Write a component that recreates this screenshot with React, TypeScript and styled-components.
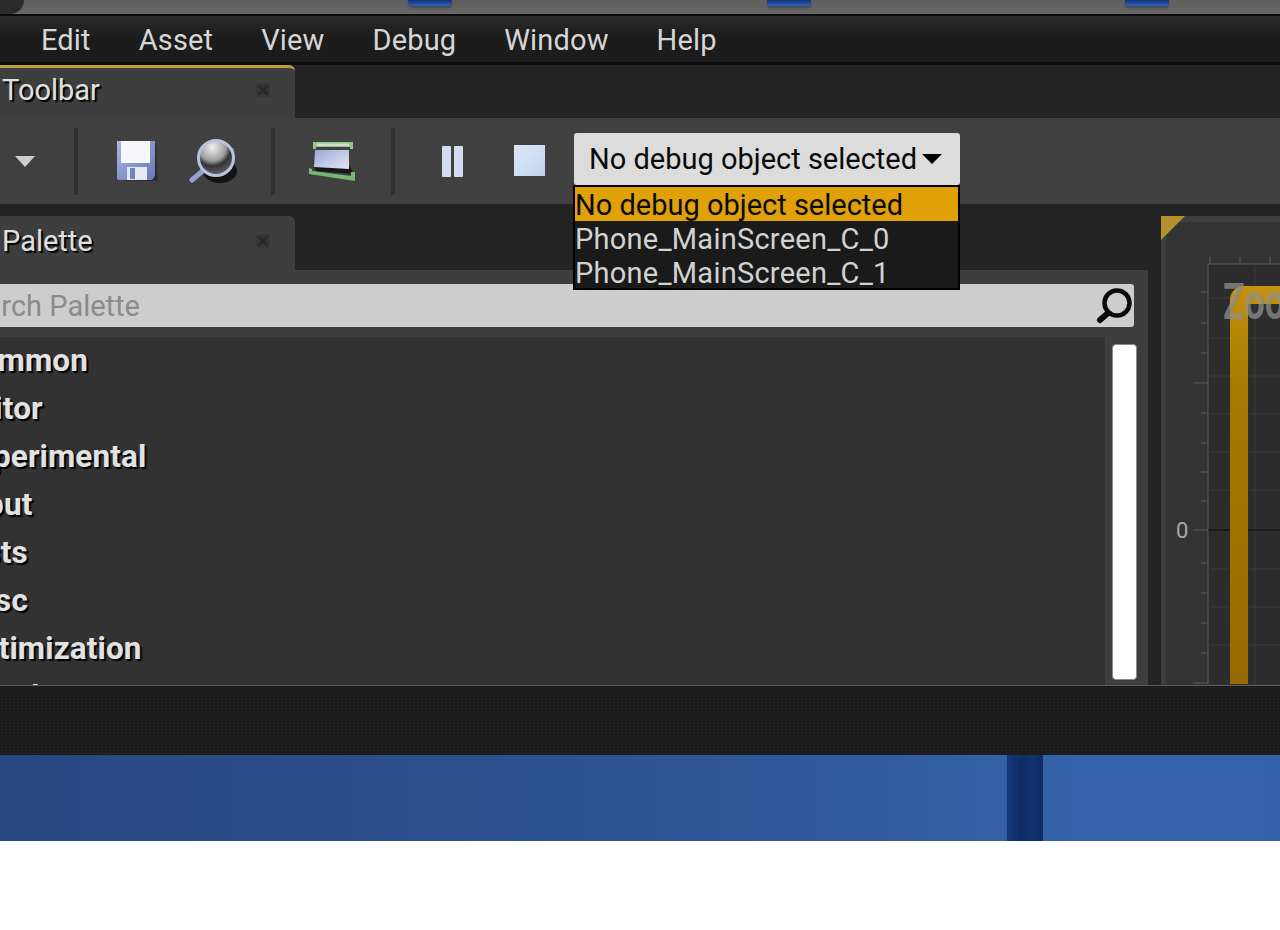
import React from "react";
import styled, { createGlobalStyle } from "styled-components";

const GlobalStyle = createGlobalStyle`
  html, body {
    margin: 0;
    padding: 0;
    background: #fff;
    font-family: Roboto, "Liberation Sans", sans-serif;
  }
`;

const Page = styled.div`
  width: 1280px;
  height: 930px;
  overflow: hidden;
  background: #fff;
  display: flex;
  flex-direction: column;
`;

const TitleBar = styled.div`
  height: 14px;
  flex: none;
  display: flex;
  background: linear-gradient(#5f5f5f, #686868);
  border-bottom: 2px solid #0c0c0c;
`;

const TitleCap = styled.div`
  width: 24px;
  height: 14px;
  margin-right: 384px;
  background: #2a2a2a;
  border-bottom-right-radius: 14px;
`;

const TitleIcon = styled.div<{ $gap?: number }>`
  width: 44px;
  height: 6px;
  margin-right: ${(p) => p.$gap ?? 0}px;
  background: linear-gradient(#14306f, #2f62c8);
  border-radius: 0 0 4px 4px;
  box-shadow: 0 2px 2px rgba(40, 40, 40, 0.45);
`;

const MenuBar = styled.nav`
  height: 46px;
  flex: none;
  display: flex;
  align-items: center;
  gap: 48px;
  padding-left: 41px;
  background: linear-gradient(#2b2b2b, #1c1c1c 45%, #1c1c1c);
  border-bottom: 3px solid #0b0b0b;
`;

const MenuItem = styled.span`
  padding-top: 1px;
  font-size: 29px;
  letter-spacing: 0.15px;
  color: #d6d6d6;
`;

const TabStrip = styled.div`
  flex: none;
  display: flex;
  background: #232323;
`;

const Tab = styled.div<{ $active?: boolean }>`
  box-sizing: border-box;
  width: 295px;
  height: ${(p) => (p.$active ? 53 : 54)}px;
  padding: 0 24px ${(p) => (p.$active ? 6 : 4)}px 2px;
  display: flex;
  align-items: center;
  justify-content: space-between;
  background: #3e3e3e;
  border-top-right-radius: 6px;
  border-top: ${(p) => (p.$active ? "3px solid #b9a233" : "none")};
`;

const TabLabel = styled.span`
  font-size: 29px;
  color: #e0e0e0;
  text-shadow: 2px 2px 1px #000;
`;

const Toolbar = styled.div`
  height: 86px;
  flex: none;
  display: flex;
  align-items: center;
  background: #404040;
`;

const ToolSlot = styled.div<{ $left: number; $w: number }>`
  flex: none;
  display: flex;
  width: ${(p) => p.$w}px;
  margin-left: ${(p) => p.$left}px;
  filter: blur(0.5px);
`;

const ToolSeparator = styled.div<{ $left: number }>`
  flex: none;
  width: 4px;
  height: 67px;
  margin-left: ${(p) => p.$left}px;
  background: #2f2f2f;
`;

const DebugCombo = styled.div`
  position: relative;
  flex: none;
  align-self: flex-start;
  box-sizing: border-box;
  width: 386px;
  height: 52px;
  margin-top: 15px;
  margin-left: 28px;
  padding: 0 18px 0 15px;
  display: flex;
  align-items: center;
  justify-content: space-between;
  background: #dcdcdc;
  border-radius: 3px;
  color: #0a0a0a;
  font-size: 29px;
`;

const ComboCaret = styled.div`
  width: 0;
  height: 0;
  border-left: 10px solid transparent;
  border-right: 10px solid transparent;
  border-top: 10px solid #000;
`;

const DebugMenu = styled.ul`
  position: absolute;
  top: 52px;
  left: -1px;
  z-index: 5;
  box-sizing: border-box;
  width: 387px;
  height: 105px;
  margin: 0;
  padding: 0;
  list-style: none;
  background: #1a1a1a;
  border: 2px solid #000;
`;

const DebugOption = styled.li<{ $selected?: boolean }>`
  height: 34px;
  line-height: 36px;
  font-size: 29px;
  white-space: nowrap;
  letter-spacing: ${(p) => (p.$selected ? 0 : 0.25)}px;
  color: ${(p) => (p.$selected ? "#0a0a0a" : "#d2d2d2")};
  background: ${(p) => (p.$selected ? "#e0a008" : "transparent")};
`;

const Gap = styled.div`
  height: 12px;
  flex: none;
  background: #232323;
`;

const Workspace = styled.div`
  height: 469px;
  flex: none;
  display: flex;
  background: #232323;
  border-bottom: 1px solid #5a5a5a;
`;

const PalettePane = styled.section`
  width: 1148px;
  flex: none;
  display: flex;
  flex-direction: column;
`;

const PaletteBody = styled.div`
  flex: 1;
  min-height: 0;
  display: flex;
  flex-direction: column;
  background: #3e3e3e;
  padding-top: 14px;
`;

const SearchBox = styled.div`
  box-sizing: border-box;
  width: 1134px;
  height: 43px;
  flex: none;
  padding-right: 1px;
  display: flex;
  align-items: center;
  justify-content: space-between;
  background: #cdcdcd;
  border-radius: 0 3px 3px 0;
  overflow: hidden;
`;

const SearchHint = styled.span`
  margin-left: -47px;
  font-size: 29px;
  color: #8b8b8b;
`;

const ListRow = styled.div`
  flex: 1;
  min-height: 0;
  margin-top: 10px;
  display: flex;
`;

const CategoryList = styled.ul`
  width: 1105px;
  flex: none;
  margin: 0;
  padding: 0;
  list-style: none;
  overflow: hidden;
  background: #323232;
`;

const Category = styled.li`
  height: 48px;
  line-height: 47px;
  margin-left: -41px;
  font-size: 31.5px;
  font-weight: 700;
  letter-spacing: 0.1px;
  color: #e2e2e2;
  text-shadow: 2px 2px 1px #000;
`;

const ScrollTrack = styled.div`
  flex: 1;
  padding: 7px 11px 5px 7px;
  display: flex;
`;

const ScrollThumb = styled.div`
  flex: 1;
  background: #fff;
  border: 1px solid #8c8c8c;
  border-radius: 4px;
`;

const GraphPane = styled.section`
  flex: 1;
  margin-left: 13px;
  background: #333;
  overflow: hidden;
  display: flex;
`;

const Footer = styled.div`
  height: 69px;
  flex: none;
  background-color: #1c1c1c;
  background-image: radial-gradient(#232323 0.8px, transparent 1px);
  background-size: 4px 3px;
`;

const BlueBand = styled.div`
  height: 86px;
  flex: none;
  display: flex;
  padding-left: 1007px;
  background: linear-gradient(90deg, #26467f, #2f5596 55%, #3663a9 85%, #3562a8);
`;

const BandStripe = styled.div`
  width: 36px;
  background: linear-gradient(90deg, #163a7c, #0d2c68 40%, #12336f 70%, #0c2a66);
`;

const MENU = ["Edit", "Asset", "View", "Debug", "Window", "Help"];
const CATEGORIES = [
  "Common",
  "Editor",
  "Experimental",
  "Input",
  "Lists",
  "Misc",
  "Optimization",
  "Panel",
];
const DEBUG_OBJECTS = ["Phone_MainScreen_C_0", "Phone_MainScreen_C_1"];

function CloseGlyph() {
  return (
    <svg width="16" height="16" viewBox="0 0 16 16" style={{ filter: "blur(0.6px)" }}>
      <rect x="1" y="1" width="14" height="14" rx="2" fill="#363636" />
      <path d="M3.5 3.5l9 9M12.5 3.5l-9 9" stroke="#292929" strokeWidth="3" />
    </svg>
  );
}

function DownArrow() {
  return (
    <svg width="20" height="11" viewBox="0 0 20 11">
      <path d="M0 0h20L10 11z" fill="#cfcfcf" />
    </svg>
  );
}

function SaveIcon() {
  return (
    <svg width="42" height="43" viewBox="0 0 42 43">
      <defs>
        <linearGradient id="diskBody" x1="0" y1="0" x2="1" y2="1">
          <stop offset="0" stopColor="#a9b7e2" />
          <stop offset="1" stopColor="#6278b8" />
        </linearGradient>
      </defs>
      <path d="M4 4h35l2 37H8z" fill="#151515" opacity="0.45" />
      <path d="M0 1h38v35l-3 4H2a2 2 0 0 1-2-2z" fill="url(#diskBody)" />
      <rect x="4" y="1" width="29" height="22" fill="#f6f6fb" />
      <rect x="10" y="27" width="20" height="13" fill="#e6e8f2" />
      <rect x="13" y="28" width="5" height="11" fill="#6f84c0" />
    </svg>
  );
}

function FindIcon() {
  return (
    <svg width="48" height="46" viewBox="0 0 48 46">
      <defs>
        <radialGradient id="lens" cx="0.4" cy="0.2" r="0.85">
          <stop offset="0" stopColor="#f2f2f2" />
          <stop offset="0.45" stopColor="#9b9b9b" />
          <stop offset="0.62" stopColor="#333" />
          <stop offset="1" stopColor="#707070" />
        </radialGradient>
      </defs>
      <ellipse cx="31" cy="33" rx="17" ry="12" fill="#0c0c0c" opacity="0.85" />
      <path d="M12 10h33v8H12z" fill="#7f90bc" opacity="0.55" />
      <path d="M16 31L3 42" stroke="#8fa3d3" strokeWidth="5" strokeLinecap="round" />
      <circle cx="27" cy="20" r="17.5" fill="url(#lens)" stroke="#b6c3e2" strokeWidth="3" />
    </svg>
  );
}

function FrameIcon() {
  return (
    <svg width="48" height="40" viewBox="0 0 48 40">
      <defs>
        <linearGradient id="frameFill" x1="0" y1="0" x2="1" y2="1">
          <stop offset="0" stopColor="#99a6da" />
          <stop offset="0.6" stopColor="#c8d0ea" />
          <stop offset="1" stopColor="#dfe4ee" />
        </linearGradient>
      </defs>
      <path d="M4 1h40v7h-3V6H7v2H4z" fill="#8fc48c" />
      <path d="M8 2.5h32v2.5H8z" fill="#d3dfcc" />
      <path d="M5 26l35-2 5 9-38-3z" fill="#101010" opacity="0.85" />
      <path d="M6 9h34v19L5 26z" fill="url(#frameFill)" />
      <path d="M0 27l3 1v2l39 5v-4h4v9L0 33z" fill="#74b874" />
    </svg>
  );
}

function PauseIcon() {
  return (
    <svg width="22" height="31" viewBox="0 0 22 31">
      <rect x="0" y="0" width="9" height="31" rx="1" fill="#d3ddf2" />
      <rect x="12" y="0" width="9" height="31" rx="1" fill="#d3ddf2" />
    </svg>
  );
}

function StopIcon() {
  return (
    <svg width="32" height="32" viewBox="0 0 32 32">
      <defs>
        <linearGradient id="stopFill" x1="0" y1="0" x2="1" y2="1">
          <stop offset="0" stopColor="#dfe4f5" />
          <stop offset="0.5" stopColor="#cfe0f3" />
          <stop offset="1" stopColor="#c6cfee" />
        </linearGradient>
      </defs>
      <rect width="31" height="31" fill="url(#stopFill)" />
    </svg>
  );
}

function SearchGlyph() {
  return (
    <svg width="37" height="36" viewBox="0 0 37 36" style={{ flex: "none" }}>
      <circle cx="21" cy="15" r="12.5" fill="none" stroke="#0a0a0a" strokeWidth="4.5" />
      <path d="M12 25L4 32" stroke="#0a0a0a" strokeWidth="6" strokeLinecap="round" />
    </svg>
  );
}

// plot in the curve editor, coordinates are relative to the pane
function CurveGraph() {
  const sideTicks = [76, 107, 137, 197, 227, 256, 285, 347, 377, 407, 437];
  const longTicks = [167, 314, 467];
  const gridRows = [82, 122, 160, 198, 236, 274, 353, 391, 429];
  return (
    <svg width="119" height="468" viewBox="0 0 119 468">
      <defs>
        <linearGradient id="curveFill" x1="0" y1="0" x2="0" y2="1">
          <stop offset="0" stopColor="#c4920f" />
          <stop offset="0.25" stopColor="#a87a02" />
          <stop offset="1" stopColor="#966a00" />
        </linearGradient>
      </defs>
      <rect x="0" y="0" width="119" height="6" fill="#3e3e3e" />
      <rect x="0" y="0" width="5" height="468" fill="#3e3e3e" />
      <path d="M0 0h24L0 24z" fill="#b4902a" />
      <rect x="47" y="48" width="72" height="420" fill="#2c2c2c" />
      <path d="M47 48h72M47 48v420" stroke="#5c5c5c" strokeWidth="1" />
      {gridRows.map((y) => (
        <path key={y} d={`M47 ${y}h72`} stroke="#3b3b3b" strokeWidth="1" />
      ))}
      <path d="M94 48v420" stroke="#3b3b3b" strokeWidth="1" />
      {sideTicks.map((y) => (
        <path key={y} d={`M40 ${y}h7`} stroke="#5c5c5c" strokeWidth="1" />
      ))}
      {longTicks.map((y) => (
        <path key={y} d={`M32 ${y}h15`} stroke="#5c5c5c" strokeWidth="1" />
      ))}
      {[49, 79, 109].map((x) => (
        <path key={x} d={`M${x} 41v7`} stroke="#5c5c5c" strokeWidth="1" />
      ))}
      <path d="M47 314h72" stroke="#0c0c0c" strokeWidth="1" />
      <path d="M69 468V84a14 14 0 0 1 14-14h36v18H87v380z" fill="url(#curveFill)" />
      <text x="15" y="322" fontFamily="Roboto, sans-serif" fontSize="22" fill="#a8a8a8">
        0
      </text>
      <text
        transform="translate(62 103) scale(0.72 1)"
        fontFamily="Roboto, sans-serif"
        fontSize="50"
        fontWeight="700"
        fill="#8e8e8e"
        fillOpacity="0.75"
      >
        Zoom
      </text>
    </svg>
  );
}

export default function App() {
  return (
    <Page>
      <GlobalStyle />
      <TitleBar>
        <TitleCap />
        <TitleIcon $gap={315} />
        <TitleIcon $gap={314} />
        <TitleIcon />
      </TitleBar>
      <MenuBar>
        {MENU.map((item) => (
          <MenuItem key={item}>{item}</MenuItem>
        ))}
      </MenuBar>
      <TabStrip>
        <Tab $active>
          <TabLabel>Toolbar</TabLabel>
          <CloseGlyph />
        </Tab>
      </TabStrip>
      <Toolbar>
        <ToolSlot $left={15} $w={20}>
          <DownArrow />
        </ToolSlot>
        <ToolSeparator $left={39} />
        <ToolSlot $left={39} $w={42}>
          <SaveIcon />
        </ToolSlot>
        <ToolSlot $left={30} $w={48}>
          <FindIcon />
        </ToolSlot>
        <ToolSeparator $left={34} />
        <ToolSlot $left={34} $w={48}>
          <FrameIcon />
        </ToolSlot>
        <ToolSeparator $left={34} />
        <ToolSlot $left={47} $w={22}>
          <PauseIcon />
        </ToolSlot>
        <ToolSlot $left={50} $w={32}>
          <StopIcon />
        </ToolSlot>
        <DebugCombo>
          No debug object selected
          <ComboCaret />
          <DebugMenu>
            <DebugOption $selected>No debug object selected</DebugOption>
            {DEBUG_OBJECTS.map((name) => (
              <DebugOption key={name}>{name}</DebugOption>
            ))}
          </DebugMenu>
        </DebugCombo>
      </Toolbar>
      <Gap />
      <Workspace>
        <PalettePane>
          <TabStrip>
            <Tab>
              <TabLabel>Palette</TabLabel>
              <CloseGlyph />
            </Tab>
          </TabStrip>
          <PaletteBody>
            <SearchBox>
              <SearchHint>Search Palette</SearchHint>
              <SearchGlyph />
            </SearchBox>
            <ListRow>
              <CategoryList>
                {CATEGORIES.map((name) => (
                  <Category key={name}>{name}</Category>
                ))}
              </CategoryList>
              <ScrollTrack>
                <ScrollThumb />
              </ScrollTrack>
            </ListRow>
          </PaletteBody>
        </PalettePane>
        <GraphPane>
          <CurveGraph />
        </GraphPane>
      </Workspace>
      <Footer />
      <BlueBand>
        <BandStripe />
      </BlueBand>
    </Page>
  );
}
